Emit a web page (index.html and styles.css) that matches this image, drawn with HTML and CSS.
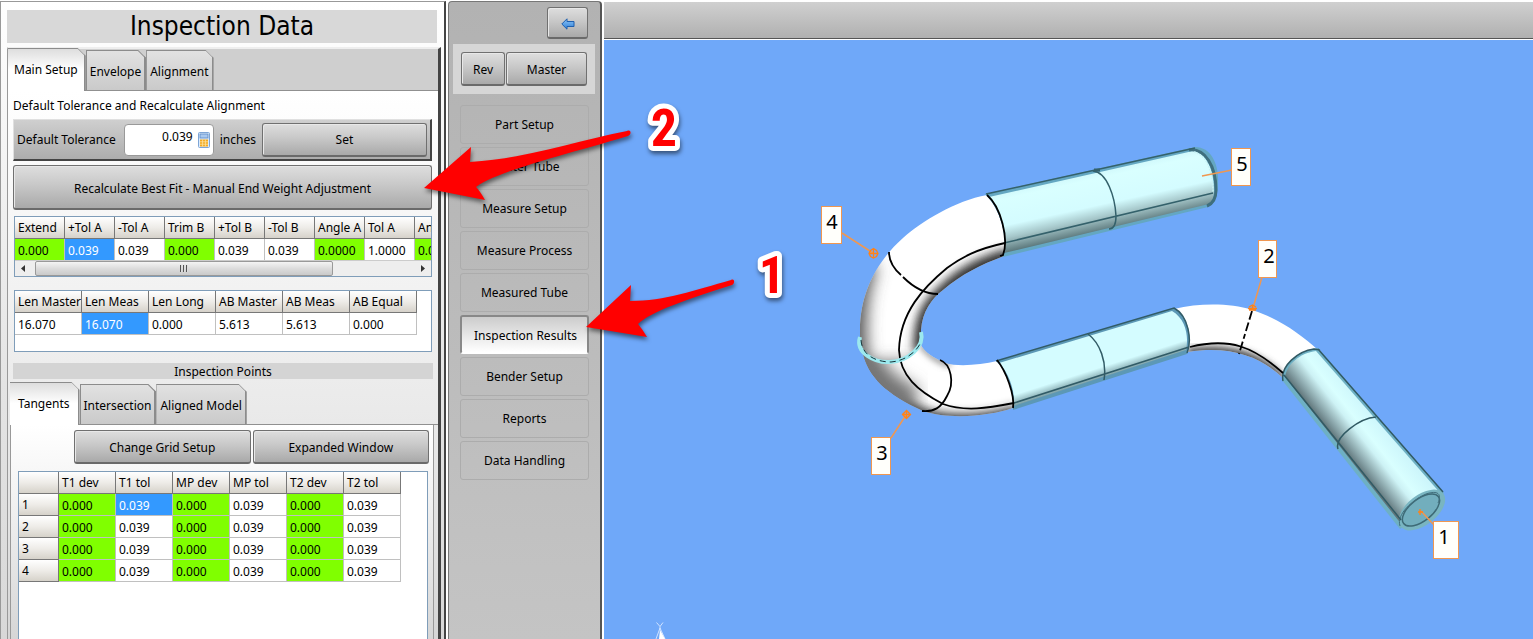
FILE: index.html
```html
<!DOCTYPE html>
<html lang="en">
<head>
<meta charset="utf-8">
<title>Inspection Data</title>
<link rel="stylesheet" href="styles.css">
</head>
<body>
<div class="app">
  <section class="inspection">
    <h1 class="title">Inspection Data</h1>
    <div class="pane">
      <div class="tabs">
        <button class="tab active">Main Setup</button>
        <button class="tab">Envelope</button>
        <button class="tab">Alignment</button>
      </div>
      <div class="pane-body">
        <h2 class="caption">Default Tolerance and Recalculate Alignment</h2>
        <div class="tolerance">
          <label for="tol">Default Tolerance</label>
          <span class="field">
            <input id="tol" value="0.039">
            <svg class="calc" viewBox="0 0 12 16" width="12" height="16" aria-hidden="true">
              <rect x=".5" y=".5" width="11" height="15" rx="1" fill="#dcebfb" stroke="#7da5d6"/>
              <rect x="2" y="2" width="8" height="4" fill="#a9c9ef" stroke="#5d8ac6" stroke-width=".8"/>
              <path d="M2 7.500h8v7H2z" fill="#f4a81d"/>
              <path d="M2 9.800h8M2 12.200h8M4.600 7.500v7M7.400 7.500v7" stroke="#fde3a2" stroke-width=".8"/>
            </svg>
          </span>
          <span class="unit">inches</span>
          <button class="btn set">Set</button>
        </div>
        <button class="btn recalc">Recalculate Best Fit - Manual End Weight Adjustment</button>

        <div class="grid-box scroll">
          <table class="grid ends">
            <thead><tr><th>Extend</th><th>+Tol A</th><th>-Tol A</th><th>Trim B</th><th>+Tol B</th><th>-Tol B</th><th>Angle A</th><th>Tol A</th><th>Angle B</th></tr></thead>
            <tbody><tr><td class="ok">0.000</td><td class="sel">0.039</td><td>0.039</td><td class="ok">0.000</td><td>0.039</td><td>0.039</td><td class="ok">0.0000</td><td>1.0000</td><td class="ok">0.0000</td></tr></tbody>
          </table>
          <div class="scrollbar">
            <svg class="arrow" viewBox="0 0 20 15" width="20" height="15" aria-hidden="true"><path d="M10 4v7L6 7.500z" fill="#333"/></svg>
            <div class="thumb"><i></i><i></i><i></i></div>
            <svg class="arrow" viewBox="0 0 20 15" width="20" height="15" aria-hidden="true"><path d="M10 4v7l4-3.500z" fill="#333"/></svg>
          </div>
        </div>

        <div class="grid-box lengths-box">
          <table class="grid lengths">
            <thead><tr><th>Len Master</th><th>Len Meas</th><th>Len Long</th><th>AB Master</th><th>AB Meas</th><th>AB Equal</th></tr></thead>
            <tbody><tr><td>16.070</td><td class="sel">16.070</td><td>0.000</td><td>5.613</td><td>5.613</td><td>0.000</td></tr></tbody>
          </table>
        </div>

        <h2 class="band">Inspection Points</h2>
        <div class="tabs lower">
          <button class="tab active">Tangents</button>
          <button class="tab">Intersection</button>
          <button class="tab">Aligned Model</button>
        </div>
        <div class="points">
          <div class="actions">
            <button class="btn">Change Grid Setup</button>
            <button class="btn">Expanded Window</button>
          </div>
          <div class="grid-box points-box">
            <table class="grid tangents">
              <thead><tr><th></th><th>T1 dev</th><th>T1 tol</th><th>MP dev</th><th>MP tol</th><th>T2 dev</th><th>T2 tol</th></tr></thead>
              <tbody>
                <tr><th>1</th><td class="ok">0.000</td><td class="sel">0.039</td><td class="ok">0.000</td><td>0.039</td><td class="ok">0.000</td><td>0.039</td></tr>
                <tr><th>2</th><td class="ok">0.000</td><td>0.039</td><td class="ok">0.000</td><td>0.039</td><td class="ok">0.000</td><td>0.039</td></tr>
                <tr><th>3</th><td class="ok">0.000</td><td>0.039</td><td class="ok">0.000</td><td>0.039</td><td class="ok">0.000</td><td>0.039</td></tr>
                <tr><th>4</th><td class="ok">0.000</td><td>0.039</td><td class="ok">0.000</td><td>0.039</td><td class="ok">0.000</td><td>0.039</td></tr>
              </tbody>
            </table>
          </div>
        </div>
      </div>
    </div>
  </section>

  <nav class="nav">
    <div class="nav-top">
      <button class="btn back" aria-label="Back">
        <svg viewBox="0 0 14 12" width="14" height="12" aria-hidden="true">
          <defs><linearGradient id="bk" x2="0" y2="1"><stop stop-color="#8fc6f8"/><stop offset="1" stop-color="#2e7fd6"/></linearGradient></defs>
          <path d="M.8 6 6 .8v2.700h7v5H6v2.700z" fill="url(#bk)" stroke="#1f5fae"/>
        </svg>
      </button>
    </div>
    <div class="modes">
      <button class="btn rev">Rev</button>
      <button class="btn master">Master</button>
    </div>
    <div class="steps">
      <button class="step">Part Setup</button>
      <button class="step">Master Tube</button>
      <button class="step">Measure Setup</button>
      <button class="step">Measure Process</button>
      <button class="step">Measured Tube</button>
      <button class="step current">Inspection Results</button>
      <button class="step">Bender Setup</button>
      <button class="step">Reports</button>
      <button class="step">Data Handling</button>
    </div>
  </nav>

  <main class="viewer">
    <div class="toolbar"></div>
    <svg class="scene" viewBox="604 40 929 599" preserveAspectRatio="xMinYMin meet" role="img" aria-label="Bent tube model">
      <defs>
        <linearGradient id="gUp" gradientUnits="userSpaceOnUse" x1="1090" y1="170" x2="1104" y2="234">
          <stop stop-color="#cdf6fa"/><stop offset=".15" stop-color="#d9ffff"/><stop offset=".55" stop-color="#d4fcff"/><stop offset=".74" stop-color="#a5c6c9"/><stop offset="1" stop-color="#4c676b"/>
        </linearGradient>
        <linearGradient id="gMid" gradientUnits="userSpaceOnUse" x1="1088" y1="334" x2="1103" y2="381">
          <stop stop-color="#d4fcff"/><stop offset=".72" stop-color="#d4fcff"/><stop offset="1" stop-color="#5f8188"/>
        </linearGradient>
        <linearGradient id="gLow" gradientUnits="userSpaceOnUse" x1="1338" y1="447" x2="1376" y2="417">
          <stop stop-color="#54666a"/><stop offset=".18" stop-color="#7f999e"/><stop offset=".5" stop-color="#cdf2f5"/><stop offset=".65" stop-color="#d9ffff"/><stop offset="1" stop-color="#cdf6fb"/>
        </linearGradient>
        <filter id="b5" x="-30%" y="-30%" width="160%" height="160%"><feGaussianBlur stdDeviation="5"/></filter>
        <filter id="b7" x="-30%" y="-30%" width="160%" height="160%"><feGaussianBlur stdDeviation="8"/></filter>
        <filter id="b2" x="-30%" y="-30%" width="160%" height="160%"><feGaussianBlur stdDeviation="3"/></filter>
        <clipPath id="c4"><path d="M987 195C955 201 922 221 903 238C878 260 860 292 860 330V347C872 368 908 368 921 345V330C922 312 932 298 943 290C962 274 980 265 1004 256C1008 236 1000 210 987 195Z"/></clipPath>
        <clipPath id="c3"><path d="M862 350C868 378 887 394 923 411C950 420 990 416 1013 408C1015 390 1006 370 997 361C980 365 958 367 945 363C934 358 924 352 921 345C905 366 880 366 862 350Z"/></clipPath>
        <clipPath id="c2"><path d="M1174 309C1200 303 1230 303 1252 310C1280 319 1300 334 1318 350C1300 352 1285 364 1283 378C1262 358 1232 345 1188 352C1191 334 1186 318 1174 309Z"/></clipPath>
      </defs>

      <g clip-path="url(#c3)">
        <path d="M850 340h170v80H850z" fill="#fff"/>
        <path d="M856 350C866 384 890 402 923 416C950 426 990 422 1018 413" fill="none" stroke="#333" stroke-width="16" filter="url(#b5)"/>
        <path d="M860 350C866 378 886 394 912 406" fill="none" stroke="#777" stroke-width="38" filter="url(#b7)"/>
        <path d="M921 344C927 354 940 362 950 365" fill="none" stroke="#888" stroke-width="5" filter="url(#b2)"/>
      </g>
      <g clip-path="url(#c4)">
        <path d="M850 180h170v200H850z" fill="#fff"/>
        <path d="M1010 259C980 268 963 278 948 293C932 307 924 318 924 352" fill="none" stroke="#333" stroke-width="22" filter="url(#b5)"/>
        <path d="M866 262C853 295 851 340 860 374H925" fill="none" stroke="#555" stroke-width="24" filter="url(#b7)"/>
      </g>
      <g clip-path="url(#c2)">
        <path d="M1170 300h150v90h-150z" fill="#fff"/>
        <path d="M1188 354C1232 347 1262 360 1281 381" fill="none" stroke="#555" stroke-width="12" filter="url(#b2)"/>
      </g>

      <path d="M985 194 1195 147C1212 147 1219 166 1218 182C1218 196 1215 204 1208 207L1003 257C1008 234 1000 209 985 194Z" fill="#64a7c2"/>
      <path d="M989 197 1193 151C1207 153 1214 172 1214 190C1214 198 1212 203 1209 204L1004 253C1007 234 1001 211 989 197Z" fill="url(#gUp)"/>
      <path d="M1189 150C1205 148 1216 166 1216 190C1216 200 1212 204 1207 206" fill="none" stroke="#3f6f7d" stroke-width="3"/>
      <path d="M1194 152C1207 155 1213 172 1213 192" fill="none" stroke="#c8f3f5" stroke-width="1.500" stroke-dasharray="2 1"/>
      <path d="M986 194 1195 148M1004 243 1213 193M1093 171C1107 172 1115 197 1116 216C1116 224 1114 229 1109 229" fill="none" stroke="#34616b" stroke-width="1.500"/>
      <path d="M1094 170 1100 170" stroke="#34616b" stroke-width="3"/>

      <path d="M996 361 1174 308C1190 316 1192 341 1187 354L1013 410C1015 390 1007 371 996 361Z" fill="#5c98b6"/>
      <path d="M999 363 1172 311C1186 319 1189 337 1186 350L1014 406C1015 390 1009 373 999 363Z" fill="url(#gMid)"/>
      <path d="M996 361 1174 308C1189 316 1192 341 1187 353M1014 403 1189 347M1088 334C1100 343 1107 362 1104 380" fill="none" stroke="#315b66" stroke-width="1.500"/>

      <path d="M1318 348 1444 493 1400 529 1282 380C1282 365 1298 350 1318 348Z" fill="#6eb0c4"/>
      <path d="M1316 351 1441 494 1402 525 1285 377C1287 364 1300 353 1316 351Z" fill="url(#gLow)"/>
      <ellipse cx="1422" cy="510" rx="27" ry="15" transform="rotate(-38 1422 510)" fill="#79b5c1"/>
      <ellipse cx="1421" cy="510" rx="22" ry="11" transform="rotate(-38 1421 510)" fill="#72aebd" stroke="#3d6a76" stroke-width="1.500"/>
      <path d="M1400 526C1396 514 1413 500 1426 494C1438 490 1442 494 1438 503" fill="none" stroke="#416e7c"/>
      <path d="M1318 349 1443 492M1284 375 1401 520M1283 381C1280 366 1298 351 1314 349L1320 350M1338 449C1334 437 1360 418 1376 417" fill="none" stroke="#315a64" stroke-width="1.500"/>

      <g fill="none" stroke="#000" stroke-width="1.800">
        <path d="M987 195C1001 207 1009 239 1003 255L1000 256"/>
        <path d="M1005 243C977 249 962 257 947 268C924 287 900 312 899 350C900 376 918 391 943 404C965 412 988 408 1014 403"/>
        <path d="M889 252C889 262 894 269 901 275M903 277C913 287 924 294 938 294"/>
        <path d="M940 360C951 364 955 383 947 396C941 408 934 412 922 411"/>
        <path d="M997 360C1006 371 1015 395 1013 408"/>
        <path d="M1190 347C1230 337 1254 347 1283 373"/>
        <path d="M1252 311 1239 354" stroke-dasharray="9 3 9 3 5 3"/>
      </g>
      <path d="M860 337C855 353 875 363 890 362C908 361 925 347 921 332" fill="none" stroke="#9ce9ee" stroke-width="4"/>
      <path d="M861 340C862 356 877 362 891 362C904 361 916 353 921 342" fill="none" stroke="#163237" stroke-dasharray="6 4"/>

      <g stroke="#f09750" stroke-width="1.500" fill="none">
        <path d="M842 233 873 253M891 438 906 415M1232 170 1202 176M1262 277 1253 308M1421 511 1434 525"/>
      </g>
      <g stroke="#ff8218" stroke-width="1.300" fill="none">
        <path d="M869 253.500h9M873.500 249v9M870.500 250.500l3-2 3 2 1.500 3-1.500 3-3 1.500-3-1.500-1.500-3zM902 414.500h9M906.500 410v9M902.500 414.500l4-4 4 4-4 4zM1248 308.500h9M1252.500 305v5M1249 307l3.500-2 3.500 2M1249 310h7M1418 512h5M1420 509v6"/>
      </g>
      <g fill="#fffffb" stroke="#f09750">
        <rect x="821.500" y="206.500" width="20" height="37"/>
        <rect x="871.500" y="437.500" width="19" height="37"/>
        <rect x="1231.500" y="148.500" width="19" height="37"/>
        <rect x="1258.500" y="240.500" width="18" height="37"/>
        <rect x="1433.500" y="521.500" width="25" height="37"/>
      </g>
      <g class="pin">
        <text x="832" y="229">4</text><text x="882" y="460">3</text><text x="1242" y="171">5</text><text x="1269" y="263">2</text><text x="1444" y="544">1</text>
      </g>
      <path d="M656.500 622.500l3.500 4 3-4M660 626.500v4M660 628l-4 11M660 628l5 11" fill="none" stroke="#cfe2ff"/>
      <path d="M660 630l5 9h-6z" fill="#fff"/>
    </svg>
  </main>

  <svg class="callouts" aria-hidden="true">
    <g class="callout-arrow">
      <path d="M627 131C631 129 632 134 628 136C565 155 500 170 476 187Q480 191 485 200L424 188 471 147 470 162C525 159 575 141 627 131Z"/>
      <path d="M731 280C735 278 735 284 732 285C690 298 650 312 638 324Q643 330 647 337L586 327 631 285 630 301C665 301 695 290 731 280Z"/>
    </g>
    <g class="callout-number">
      <text x="664" y="146">2</text>
      <text x="772" y="293">1</text>
    </g>
  </svg>
</div>
</body>
</html>
```
FILE: styles.css
```css
* { box-sizing: border-box; }
body { margin: 0; background: #fff; }
body, button, input { font: 12px/16px "Noto Sans", "DejaVu Sans Condensed", sans-serif; color: #000; }
h1, h2 { margin: 0; font-weight: normal; text-align: center; }
button { padding: 2px 0 0; white-space: nowrap; }

.app { position: relative; display: flex; height: 100vh; overflow: hidden; }

.btn {
  border: 1px solid #707070;
  border-bottom: 2px solid #6a6a6a;
  border-radius: 3px;
  background: linear-gradient(#dedede, #c8c8c8 45%, #a9a9a9);
  box-shadow: inset 1px 1px 0 #e8e8e8;
}

/* Inspection column */
.inspection {
  flex: 0 0 446px;
  min-width: 0;
  display: flex;
  flex-direction: column;
  margin-top: 1px;
  padding: 8px 3px 0 6px;
  border: 1px solid #999;
  border-right: 2px solid #444;
  border-bottom: 0;
  background: linear-gradient(#fff, #e4e4e4 60%, #d8d8d8);
}
.title { margin-right: 4px; background: #d8d8d8; font: 26px/33px "DejaVu Sans Condensed", sans-serif; }
.pane {
  flex: 1;
  display: flex;
  flex-direction: column;
  margin-top: 4px;
  border-right: 3px solid #444;
  border-top: 2px solid #eee;
  border-left: 1px solid #999;
  background: #cfcfcf;
  min-height: 0;
}
.tabs { display: flex; align-items: flex-end; height: 42px; border-bottom: 1px solid #909090; }
.tab {
  height: 40px;
  padding: 2px 4px 0;
  border: 1px solid #8c8c8c;
  border-right-width: 2px;
  border-bottom: 0;
  background:
    linear-gradient(45deg, transparent 42%, #888 45% 58%, transparent 60%) right top / 8px 8px no-repeat border-box,
    linear-gradient(#e2e2e2, #cacaca) border-box;
  clip-path: polygon(0 0, calc(100% - 8px) 0, 100% 8px, 100% 100%, 0 100%);
}
.tab + .tab { padding: 2px 3px 0; }
.tab.active {
  height: 43px;
  margin-bottom: -1px;
  padding: 0 6px;
  border-left-width: 0;
  background:
    linear-gradient(45deg, transparent 42%, #888 45% 58%, transparent 60%) right top / 8px 8px no-repeat border-box,
    linear-gradient(#dcdcdc, #fff 50%) border-box;
}
.pane-body {
  flex: 1;
  display: flex;
  flex-direction: column;
  min-height: 0;
  padding: 7px 0 0 5px;
  background: linear-gradient(#fff, #e2e2e2 80%, #d6d6d6);
}
.caption { font-size: 12px; text-align: left; }
.tolerance {
  display: flex;
  align-items: center;
  height: 42px;
  margin: 5px 6px 0 0;
  padding: 0 3px;
  border: 1px solid #e0e0e0;
  border-right: 2px solid #444;
  border-bottom: 2px solid #444;
  background: linear-gradient(#cfcfcf, #adadad);
}
.field { position: relative; width: 90px; height: 32px; margin: 0 6px 0 8px; }
.field input {
  width: 100%;
  height: 100%;
  padding: 0 20px 7px 4px;
  border: 1px solid #999;
  border-radius: 4px;
  background: #fff;
  text-align: right;
}
.calc { position: absolute; right: 4px; top: 8px; }
.set { flex: 1; height: 34px; margin-left: 6px; }
.recalc { height: 45px; margin: 4px 6px 0 0; padding-top: 4px; }

/* Grids */
.grid-box { margin: 0 6px 0 1px; border: 1px solid #7f9db9; background: #fff; overflow: hidden; }
.grid { border-collapse: separate; border-spacing: 0; table-layout: fixed; }
.grid th, .grid td {
  height: 22px;
  padding: 0 0 0 3px;
  text-align: left;
  font-weight: normal;
  line-height: 20px;
  white-space: nowrap;
  overflow: hidden;
  border-right: 1px solid #c0c0c0;
  border-bottom: 1px solid #c0c0c0;
}
.grid th { border-color: #777; background: linear-gradient(#fff, #eeece8 50%, #d6d2ca); }
.grid td { padding-top: 3px; line-height: 18px; }
.grid .ok { background: #80ff00; }
.grid .sel { background: #3399ff; color: #fff; }
.ends { width: 450px; }
.grid.ends td { height: 21px; border-bottom: 0; }
.scroll { flex: none; height: 61px; margin-top: 6px; }
.scrollbar { display: flex; height: 16px; border-top: 1px solid #ccc; background: #eee; }
.thumb {
  flex: 0 0 298px;
  display: flex;
  align-items: center;
  justify-content: center;
  gap: 1px;
  margin-right: auto;
  border: 1px solid #999;
  border-radius: 2px;
  background: linear-gradient(#f4f4f4, #dcdcdc 50%, #cacaca);
}
.thumb i { width: 2px; height: 7px; border-left: 1px solid #555; background: #ddd; }
.lengths-box { flex: none; height: 62px; margin-top: 13px; }
.lengths { width: 402px; }
.band { flex: none; height: 16px; margin: 11px 5px 0 0; background: #d4d4d4; font-size: 12px; line-height: 18px; }
.lower { flex: none; height: 46px; margin-left: -3px; }
.lower .tab.active { padding: 0 8px; }
.points {
  flex: 1;
  display: flex;
  flex-direction: column;
  min-height: 0;
  margin: 0 4px 0 -3px;
  padding: 5px 4px 0 7px;
  border-left: 1px solid #999;
  border-right: 1px solid #999;
  background: linear-gradient(#fff, #f4f4f4 30%, #d6d6d6);
}
.actions { display: flex; gap: 2px; margin: 0 0 7px 56px; }
.actions .btn { flex: 1; height: 34px; }
.points-box { flex: 1; margin: 0 1px 0 0; border-bottom: 0; }
.tangents { width: 382px; }
.tangents th:first-child { width: 40px; padding-bottom: 1px; line-height: 19px; }

/* Step navigation */
.nav {
  flex: 0 0 154px;
  margin: 1px 0 0 2px;
  padding: 5px 5px 0 4px;
  border: 1px solid #777;
  border-right: 2px solid #555;
  border-bottom: 0;
  border-radius: 4px 4px 0 0;
  background: linear-gradient(#b2b2b2, #c4c4c4);
}
.nav-top { display: flex; justify-content: flex-end; padding: 0 7px 5px 0; }
.back { display: grid; place-items: center; width: 41px; height: 32px; }
.modes { display: flex; gap: 1px; padding: 8px; background: #d6d6d6; }
.rev { width: 44px; height: 34px; }
.master { flex: 1; height: 34px; }
.steps { display: flex; flex-direction: column; gap: 3px; padding: 11px 6px 0 7px; }
.step { height: 39px; padding: 0; border: 1px solid #acacac; border-radius: 3px; background: transparent; }
.step.current {
  padding: 2px 0 0 2px;
  border: 2px solid #888;
  border-bottom-color: #fff;
  background: linear-gradient(#ccc, #fff);
}

/* Model view */
.viewer { flex: 1; min-width: 0; display: flex; flex-direction: column; margin-left: 2px; background: #fff; }
.toolbar { flex: none; height: 37px; margin: 2px 0 1px; border-bottom: 1px solid #555; background: linear-gradient(#d0d0d0, #b0b0b0); }
.scene { flex: 1; min-height: 0; width: 100%; background: #6fa8f9; }
.pin { font: 20px "Noto Sans", sans-serif; text-anchor: middle; }

/* Callouts lie over all three columns */
.callouts { position: absolute; inset: 0; width: 100%; height: 100%; pointer-events: none; }
.callout-arrow { fill: #f00; filter: drop-shadow(1px 3px 2px rgba(0, 0, 0, .5)); }
.callout-number {
  font: bold 52px "Roboto Condensed", Roboto, "Liberation Sans", sans-serif;
  text-anchor: middle;
  fill: #f00;
  stroke: #fff;
  stroke-width: 10px;
  stroke-linejoin: round;
  paint-order: stroke;
  filter: drop-shadow(1px 3px 2px rgba(0, 0, 0, .5));
}
```
